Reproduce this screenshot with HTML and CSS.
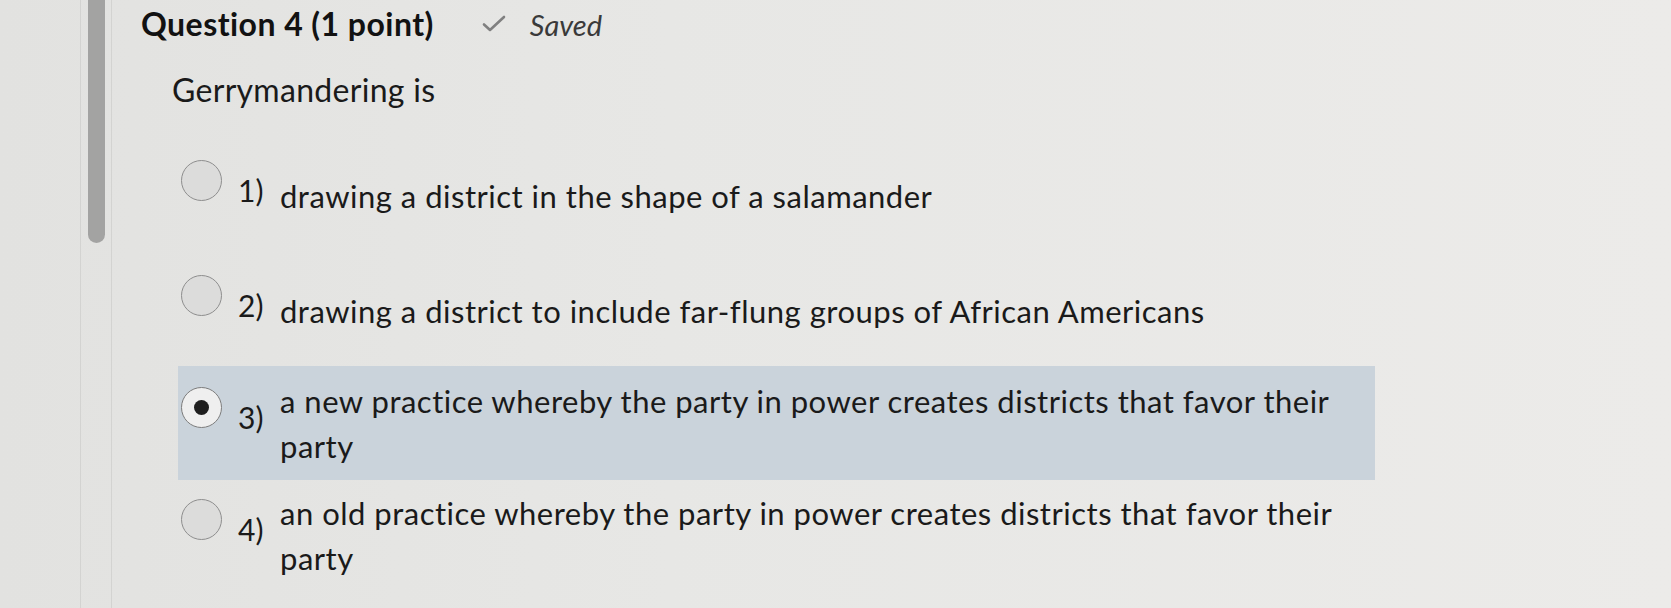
FILE: index.html
```html
<!DOCTYPE html>
<html lang="en">
<head>
<meta charset="utf-8">
<title>Question 4</title>
<link rel="stylesheet" href="styles.css">
</head>
<body>
<div class="page">
  <div class="rail"><div class="thumb"></div></div>
  <main class="content">
    <div class="qhead">
      <h1 class="qtitle">Question 4 (1 point)</h1>
      <span class="saved"><svg class="check" width="24" height="17" viewBox="0 0 24 17"><path d="M2 9.5 L8 15 L22 2" fill="none" stroke="#808080" stroke-width="2.6" stroke-linecap="round" stroke-linejoin="round"/></svg><span class="saved-text">Saved</span></span>
    </div>
    <p class="prompt">Gerrymandering is</p>
    <ul class="options">
      <li class="option"><span class="radio"></span><span class="num">1)</span><span class="text">drawing a district in the shape of a salamander</span></li>
      <li class="option"><span class="radio"></span><span class="num">2)</span><span class="text">drawing a district to include far-flung groups of African Americans</span></li>
      <li class="option selected"><span class="radio checked"></span><span class="num">3)</span><span class="text">a new practice whereby the party in power creates districts that favor their party</span></li>
      <li class="option"><span class="radio"></span><span class="num">4)</span><span class="text">an old practice whereby the party in power creates districts that favor their party</span></li>
    </ul>
  </main>
</div>
</body>
</html>
```

FILE: styles.css
```css
html, body {
  margin: 0;
  padding: 0;
}
body {
  background: linear-gradient(90deg, #e2e2e0 0%, #e7e7e5 40%, #ecebe9 100%);
  font-family: Lato, "Open Sans", sans-serif;
  color: #1a1a1a;
}
.page {
  display: flex;
  height: 608px;
  overflow: hidden;
}
.rail {
  flex: none;
  width: 30px;
  margin-left: 80px;
  border-left: 1px solid #d3d3d1;
  border-right: 1px solid #d3d3d1;
}
.thumb {
  width: 17px;
  height: 243px;
  margin-left: 7px;
  background: #a3a3a2;
  border-radius: 0 0 9px 9px;
}
.content {
  flex: 1;
  padding: 4px 0 0 29px;
}
.qhead {
  display: flex;
  align-items: baseline;
}
.qtitle {
  margin: 0;
  font: 700 32px/40px Lato, sans-serif;
  letter-spacing: 0.45px;
  color: #121212;
}
.saved {
  margin-left: 48px;
}
.check {
  margin-right: 24px;
  margin-bottom: 4px;
}
.saved-text {
  font: italic 400 29px/40px Lato, sans-serif;
  color: #3a3a3a;
}
.prompt {
  margin: 22px 0 0 31px;
  font: 400 32px/45px Lato, sans-serif;
  letter-spacing: 0.3px;
}
.options {
  list-style: none;
  margin: 51px 0 0 37px;
  padding: 0;
  width: 1197px;
}
.option {
  display: flex;
  align-items: center;
  padding: 11px 10px 11px 3px;
}
.option:nth-child(1) { margin-bottom: 48px; }
.option:nth-child(2) { margin-bottom: 21px; }
.option.selected {
  padding-top: 13px;
  background: #cad3db;
}
.radio {
  flex: none;
  box-sizing: border-box;
  width: 41px;
  height: 41px;
  margin-top: -33px;
  border-radius: 50%;
  border: 1.5px solid #8e8e8e;
  background: #dcdcdb;
}
.radio.checked {
  display: flex;
  align-items: center;
  justify-content: center;
  background: #efefef;
  border-color: #7c7c7c;
}
.radio.checked::after {
  content: "";
  width: 15px;
  height: 15px;
  border-radius: 50%;
  background: #1f1f1f;
}
.num {
  flex: none;
  width: 42px;
  margin-left: 16px;
  margin-top: -13px;
  font: 400 30px/45px Lato, sans-serif;
}
.text {
  flex: 1;
  font: 400 31px/45px Lato, sans-serif;
  letter-spacing: 0.5px;
}
```
